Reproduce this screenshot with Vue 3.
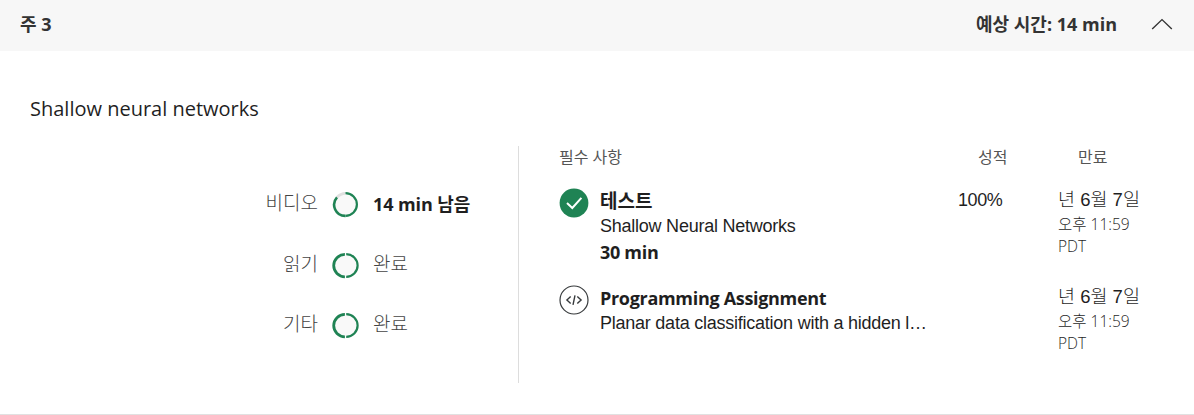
<script setup>
const progress = [
  { label: '비디오', status: '14 min 남음', partial: true },
  { label: '읽기', status: '완료', partial: false },
  { label: '기타', status: '완료', partial: false },
]
const items = [
  { kind: 'quiz', title: '테스트', name: 'Shallow Neural Networks', time: '30 min', grade: '100%' },
  { kind: 'code', title: 'Programming Assignment', name: 'Planar data classification with a hidden l…', time: '', grade: '' },
]
</script>

<template>
  <section class="week">
    <header class="bar">
      <span class="week-name">주 3</span>
      <span class="estimate">예상 시간: 14 min</span>
      <svg class="chevron" width="22" height="14" viewBox="0 0 22 14">
        <path d="M1.2 12 L11 2.6 L20.8 12" fill="none" stroke="#333" stroke-width="1.4" />
      </svg>
    </header>
    <h2 class="module">Shallow neural networks</h2>
    <div class="content">
      <div class="progress">
        <div v-for="p in progress" :key="p.label" class="progress-row">
          <span class="p-label">{{ p.label }}</span>
          <svg class="ring" :class="{ done: !p.partial }" width="27" height="27" viewBox="0 0 27 27">
            <circle cx="13.5" cy="13.5" r="11" fill="#f9f9f9" />
            <template v-if="p.partial">
              <path d="M13.5 2.4 A11.1 11.1 0 0 0 5 6.4" fill="none" stroke="#e0e0e0" stroke-width="2.8" />
              <path d="M5 6.4 A11.1 11.1 0 0 0 13.5 24.9" fill="none" stroke="#1f8354" stroke-width="2.6" />
            </template>
            <path v-else d="M12.9 2.4 A11.1 11.1 0 0 0 12.9 24.8" fill="none" stroke="#1f8354" stroke-width="2.8" />
            <path :d="p.partial ? 'M13.5 2.1 A11.4 11.4 0 0 1 13.5 24.9' : 'M14.2 2.1 A11.4 11.4 0 0 1 14.2 24.9'" fill="none" stroke="#1f8354" stroke-width="2.2" />
          </svg>
          <span class="p-status" :class="{ strong: p.partial }">{{ p.status }}</span>
        </div>
      </div>
      <div class="required">
        <div class="row head">
          <span class="h-req">필수 사항</span>
          <span class="h-grade">성적</span>
          <span class="h-due">만료</span>
        </div>
        <div v-for="i in items" :key="i.kind" class="row item" :class="i.kind">
          <svg v-if="i.kind === 'quiz'" class="icon" width="30" height="30" viewBox="0 0 30 30">
            <circle cx="15" cy="15" r="14.4" fill="#1f8354" />
            <path d="M8 15 L13.3 20 L22.4 9.8" fill="none" stroke="#fff" stroke-width="2" />
          </svg>
          <svg v-else class="icon" width="30" height="30" viewBox="0 0 30 30">
            <circle cx="15" cy="15" r="14" fill="#fff" stroke="#373a3c" stroke-width="1.2" />
            <path d="M11.7 11.5 L7.9 15 L11.7 18.5 M18.3 11.5 L22.1 15 L18.3 18.5 M16 10.4 L14 19.8" fill="none" stroke="#373a3c" stroke-width="1.4" />
          </svg>
          <div class="detail">
            <div class="title">{{ i.title }}</div>
            <div class="name">{{ i.name }}</div>
            <div v-if="i.time" class="time">{{ i.time }}</div>
          </div>
          <div class="grade">{{ i.grade }}</div>
          <div class="due">
            <div class="date">년 6월 7일</div>
            <div class="hour">오후 11:59</div>
            <div class="zone">PDT</div>
          </div>
        </div>
      </div>
    </div>
  </section>
</template>

<style>
body { margin: 0; background: #fff; }
</style>

<style scoped>
.week {
  box-sizing: border-box;
  width: 1194px;
  height: 415px;
  overflow: hidden;
  border-bottom: 1px solid #e1e1e1;
  font-family: "Open Sans", "Noto Sans CJK KR", sans-serif;
  color: #1f1f1f;
  white-space: nowrap;
}
.bar {
  display: flex;
  align-items: center;
  box-sizing: border-box;
  height: 51px;
  padding: 0 21px 3px 20px;
  background: #f7f7f7;
  color: #333;
  font-size: 18px;
  font-weight: 700;
}
.week-name, .estimate { line-height: 28px; }
.estimate { margin-left: auto; }
.chevron { margin-left: 34px; }
.module {
  margin: 44px 0 0 30px;
  font-size: 20px;
  font-weight: 400;
  line-height: 27px;
}
.content { display: flex; margin-top: 24px; height: 237px; }
.progress {
  flex: none;
  box-sizing: border-box;
  width: 519px;
  border-right: 1px solid #ddd;
  padding-top: 28px;
}
.progress-row { display: flex; align-items: center; height: 60.4px; }
.p-label { width: 318px; text-align: right; font-size: 19px; font-weight: 300; color: #444; position: relative; top: -2px; }
.ring { margin-left: 14px; }
.ring.done { margin-top: 2px; }
.p-status { margin-left: 14px; font-size: 19px; font-weight: 300; color: #444; position: relative; top: -2px; }
.p-status.strong { font-size: 18px; font-weight: 700; letter-spacing: -0.1px; color: #1f1f1f; top: -1px; }
.required { flex: none; box-sizing: border-box; width: 675px; padding-left: 40px; }
.row { display: flex; }
.head { height: 42px; font-size: 16px; line-height: 22px; color: #555; }
.h-req { width: 419px; }
.h-grade { width: 100px; }
.icon { flex: none; }
.item { height: 97px; }
.detail { width: 328px; margin-left: 11px; }
.title { font-size: 18px; font-weight: 700; letter-spacing: -0.31px; line-height: 26px; }
.quiz .title { font-size: 19px; letter-spacing: 0; }
.code .title { line-height: 27px; margin-bottom: -1px; }
.name { font-family: "Liberation Sans", Arial, sans-serif; font-size: 18px; letter-spacing: -0.24px; line-height: 25px; }
.time { font-size: 18px; font-weight: 700; letter-spacing: -0.31px; line-height: 27px; }
.grade { width: 70px; margin-left: 30px; font-family: "Liberation Sans", Arial, sans-serif; font-size: 18px; letter-spacing: -0.4px; line-height: 25px; }
.due { margin-left: 30px; }
.date { font-family: "Liberation Sans", "Noto Sans CJK KR", sans-serif; font-size: 18.5px; font-weight: 300; line-height: 24px; }
.hour, .zone { font-size: 15.5px; line-height: 22px; font-weight: 300; position: relative; top: 1px; }
</style>
